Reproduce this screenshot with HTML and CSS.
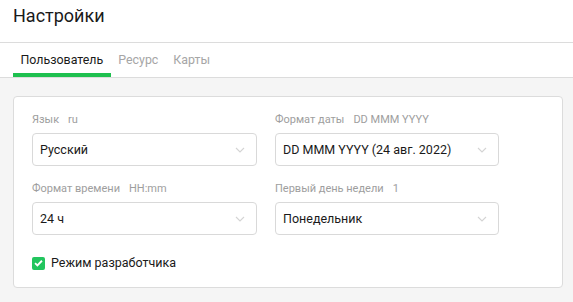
FILE: index.html
```html
<!DOCTYPE html>
<html lang="ru">
<head>
<meta charset="utf-8">
<title>Настройки</title>
<link rel="stylesheet" href="styles.css">
</head>
<body>
<header class="header"><h1 class="title">Настройки</h1></header>
<nav class="tabs">
  <div class="tab active">Пользователь</div>
  <div class="tab">Ресурс</div>
  <div class="tab">Карты</div>
</nav>
<main class="content">
  <section class="card">
    <div class="grid">
      <div class="field">
        <div class="label">Язык<span class="hint">ru</span></div>
        <div class="select"><span>Русский</span><svg class="chev" viewBox="0 0 10 6" width="10" height="6"><path d="M1 1l4 4 4-4" fill="none" stroke="#d4d4d4" stroke-width="1.1"/></svg></div>
      </div>
      <div class="field">
        <div class="label">Формат даты<span class="hint">DD MMM YYYY</span></div>
        <div class="select"><span>DD MMM YYYY (24 авг. 2022)</span><svg class="chev" viewBox="0 0 10 6" width="10" height="6"><path d="M1 1l4 4 4-4" fill="none" stroke="#d4d4d4" stroke-width="1.1"/></svg></div>
      </div>
      <div class="field">
        <div class="label">Формат времени<span class="hint">HH:mm</span></div>
        <div class="select"><span>24 ч</span><svg class="chev" viewBox="0 0 10 6" width="10" height="6"><path d="M1 1l4 4 4-4" fill="none" stroke="#d4d4d4" stroke-width="1.1"/></svg></div>
      </div>
      <div class="field">
        <div class="label">Первый день недели<span class="hint">1</span></div>
        <div class="select"><span>Понедельник</span><svg class="chev" viewBox="0 0 10 6" width="10" height="6"><path d="M1 1l4 4 4-4" fill="none" stroke="#d4d4d4" stroke-width="1.1"/></svg></div>
      </div>
    </div>
    <label class="check">
      <span class="box"><svg viewBox="0 0 14 14" width="14" height="14"><path d="M3.3 7.2l2.5 2.4 4.9-5" fill="none" stroke="#fff" stroke-width="2"/></svg></span>
      <span>Режим разработчика</span>
    </label>
  </section>
</main>
</body>
</html>
```
FILE: styles.css
```css
html, body {
  margin: 0;
  padding: 0;
  background: #f5f5f5;
  font-family: Roboto, "Liberation Sans", sans-serif;
  color: #1a1a1a;
}
.header {
  background: #fff;
  height: 42px;
  border-bottom: 1px solid #dcdcdc;
  box-sizing: content-box;
}
.title {
  margin: 0;
  padding: 4px 13px 0;
  font-size: 18px;
  font-weight: 400;
  line-height: 24px;
  color: #1a1a1a;
}
.tabs {
  display: flex;
  background: #fff;
  padding-left: 13px;
  border-bottom: 1px solid #dcdcdc;
  height: 34px;
}
.tab {
  padding: 8px 7.5px 0;
  font-size: 12.4px;
  line-height: 17px;
  color: #a6a6a6;
  box-sizing: border-box;
  height: 34px;
}
.tab.active {
  color: #1a1a1a;
  border-bottom: 4px solid #1ec04f;
}
.content {
  padding: 18px 10px 14px 13px;
}
.card {
  background: #fff;
  border: 1px solid #dcdcdc;
  border-radius: 4px;
  padding: 16px 18px 17px;
}
.grid {
  display: grid;
  grid-template-columns: 225px 224px;
  column-gap: 18px;
  row-gap: 16px;
}
.label {
  font-size: 11px;
  line-height: 14px;
  color: #9e9e9e;
  margin-bottom: 6px;
}
.hint {
  margin-left: 9px;
}
.select {
  height: 33px;
  box-sizing: border-box;
  border: 1px solid #d9d9d9;
  border-radius: 4px;
  display: flex;
  align-items: center;
  justify-content: space-between;
  padding: 0 11px 0 7px;
  font-size: 12.5px;
  color: #1a1a1a;
}
.chev {
  display: block;
}
.check {
  display: flex;
  align-items: center;
  gap: 6px;
  margin-top: 21px;
  font-size: 12.5px;
  line-height: 14px;
  color: #1a1a1a;
}
.box {
  width: 13px;
  height: 13px;
  border-radius: 2px;
  background: #22c55e;
  display: flex;
  align-items: center;
  justify-content: center;
  overflow: hidden;
}
.box svg {
  display: block;
}
```
